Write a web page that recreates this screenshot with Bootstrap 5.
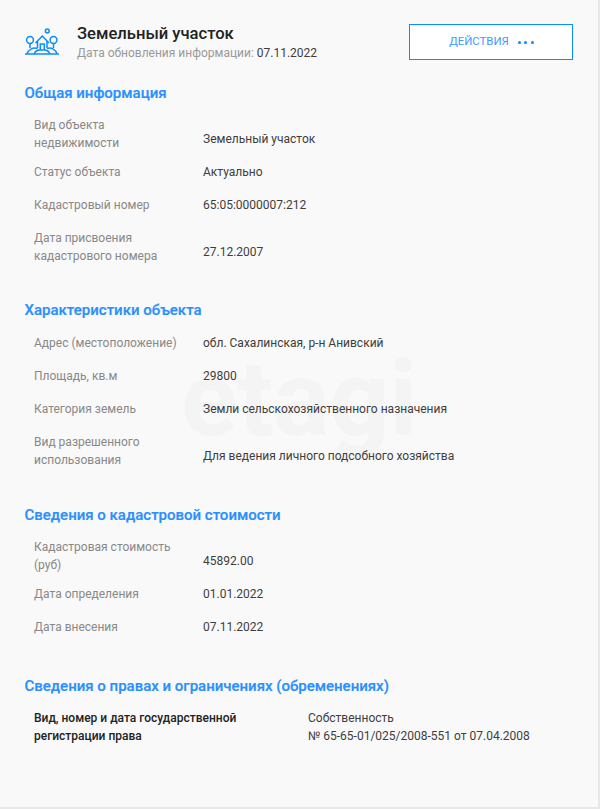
<!DOCTYPE html>
<html lang="ru">
<head>
<meta charset="utf-8">
<title>Земельный участок</title>
<link href="https://cdn.jsdelivr.net/npm/bootstrap@5.3.0/dist/css/bootstrap.min.css" rel="stylesheet">
<style>
html,body{height:100%;}
body{background:#e8e8e8;font-family:Roboto,"Liberation Sans",sans-serif;font-size:12px;color:#3d3d3d;overflow:hidden;}
.sheet{position:relative;width:598px;height:807px;background:#f9f9f9;padding:24px 25px 0 24px;overflow:hidden;}
.mark-bg{position:absolute;left:181px;top:347px;font-size:105px;line-height:105px;font-weight:700;color:#f4f4f4;pointer-events:none;}
.head-row{position:relative;height:36px;margin-bottom:23px;}
.head-icon{width:36px;height:28px;margin-right:17px;flex:none;}
.head-title{font-size:16.600px;line-height:20px;font-weight:500;color:#222;padding-top:1px;}
.head-sub{font-size:12px;line-height:16px;color:#999;margin-top:1px;}
.head-sub span{color:#3d3d3d;}
.act-btn{width:164px;height:36px;border:1px solid #0a8dff;border-radius:0;background:#fff;color:#3d9bff;font-size:11.400px;padding:0 0 0 1px;}
.act-dots{display:inline-flex;gap:3.500px;margin-left:9px;vertical-align:middle;}
.act-dots i{display:block;width:3px;height:3px;border-radius:50%;background:#0a8dff;}
.sect{position:relative;padding-bottom:25px;}
.sect-title{font-size:15px;line-height:20px;font-weight:500;color:#2a8fff;margin:0 0 13px;padding-left:.5px;-webkit-text-stroke:.2px #2a8fff;}
.sect-title.title-roomy{margin-bottom:14px;}
.info-row{display:flex;align-items:flex-start;padding-left:10px;margin-bottom:15px;line-height:18px;}
.info-row.two-line{margin-bottom:11px;}
.info-row.two-line.end-short{margin-bottom:10px;}
.two-line .info-val{padding-top:14px;}
.info-label{width:169px;flex:none;color:#888;padding-right:15px;}
.info-val{color:#3d3d3d;}
.rights{display:flex;padding-left:10px;line-height:18px;}
.rights-l{width:274px;flex:none;font-weight:500;color:#222;}
</style>
</head>
<body>
<div class="sheet">
  <div class="mark-bg">etagi</div>
  <div class="head-row d-flex align-items-center justify-content-between">
    <div class="d-flex align-items-center">
      <svg class="head-icon" viewBox="0 0 36 28" fill="none" stroke="#0a8dff" stroke-width="1.500">
        <circle cx="23.300" cy="3" r="1.900"/>
        <circle cx="6" cy="12" r="3.400"/>
        <circle cx="29.500" cy="12" r="3.400"/>
        <path d="M6 15.400v4.600M29.500 15.400v4.600"/>
        <path d="M11.500 15 18.300 8 25 15M13.500 13v7M23 13v7M16.300 22v-6h4v6"/>
        <path d="M1 26H35M3 26C4 22 9 19 13.500 20.500M33 26C32 22 27.500 19 23 20.500M10 26C11 23.500 14 22 16.300 22H20.300C22.500 22 25 23.500 26 26"/>
      </svg>
      <div>
        <div class="head-title">Земельный участок</div>
        <div class="head-sub">Дата обновления информации: <span>07.11.2022</span></div>
      </div>
    </div>
    <button type="button" class="btn act-btn">ДЕЙСТВИЯ<span class="act-dots"><i></i><i></i><i></i></span></button>
  </div>

  <div class="sect">
    <h2 class="sect-title">Общая информация</h2>
    <div class="info-row two-line"><div class="info-label">Вид объекта недвижимости</div><div class="info-val">Земельный участок</div></div>
    <div class="info-row"><div class="info-label">Статус объекта</div><div class="info-val">Актуально</div></div>
    <div class="info-row"><div class="info-label">Кадастровый номер</div><div class="info-val">65:05:0000007:212</div></div>
    <div class="info-row two-line end-short"><div class="info-label">Дата присвоения кадастрового номера</div><div class="info-val">27.12.2007</div></div>
  </div>
  <div class="sect">
    <h2 class="sect-title title-roomy">Характеристики объекта</h2>
    <div class="info-row"><div class="info-label">Адрес (местоположение)</div><div class="info-val">обл. Сахалинская, р-н Анивский</div></div>
    <div class="info-row"><div class="info-label">Площадь, кв.м</div><div class="info-val">29800</div></div>
    <div class="info-row"><div class="info-label">Категория земель</div><div class="info-val">Земли сельскохозяйственного назначения</div></div>
    <div class="info-row two-line"><div class="info-label">Вид разрешенного использования</div><div class="info-val">Для ведения личного подсобного хозяйства</div></div>
  </div>
  <div class="sect">
    <h2 class="sect-title">Сведения о кадастровой стоимости</h2>
    <div class="info-row two-line"><div class="info-label">Кадастровая стоимость (руб)</div><div class="info-val">45892.00</div></div>
    <div class="info-row"><div class="info-label">Дата определения</div><div class="info-val">01.01.2022</div></div>
    <div class="info-row"><div class="info-label">Дата внесения</div><div class="info-val">07.11.2022</div></div>
  </div>
  <div class="sect">
    <h2 class="sect-title">Сведения о правах и ограничениях (обременениях)</h2>
    <div class="rights">
      <div class="rights-l">Вид, номер и дата государственной<br>регистрации права</div>
      <div class="info-val">Собственность<br>№ 65-65-01/025/2008-551 от 07.04.2008</div>
    </div>
  </div>
</div>
<script src="https://cdn.jsdelivr.net/npm/bootstrap@5.3.0/dist/js/bootstrap.bundle.min.js"></script>
</body>
</html>
